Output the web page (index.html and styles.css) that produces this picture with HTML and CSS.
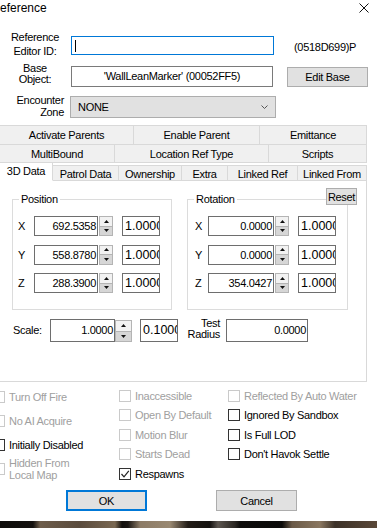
FILE: index.html
```html
<!DOCTYPE html>
<html lang="en">
<head>
  <meta charset="UTF-8" />
  <meta name="viewport" content="width=device-width, initial-scale=1.0" />
  <title>Reference</title>
  <link rel="stylesheet" href="styles.css">
</head>
<body>
  <!-- Barra de título -->
  <div class="titlebar">
    <span class="title">eference</span>
    <svg class="close" width="10" height="10" viewBox="0 0 10 10"><path d="M0.5 0.5L9.5 9.5M9.5 0.5L0.5 9.5" stroke="#111" stroke-width="1" fill="none"/></svg>
  </div>

  <!-- Campos do topo -->
  <div class="form-row row-id">
    <div class="lbl lbl-id">Reference<br>Editor ID:</div>
    <div class="field field-id"><span class="caret"></span></div>
    <div class="formid">(0518D699)P</div>
  </div>
  <div class="form-row row-base">
    <div class="lbl lbl-base">Base<br>Object:</div>
    <div class="field field-base">'WallLeanMarker' (00052FF5)</div>
    <button class="btn btn-edit">Edit Base</button>
  </div>
  <div class="form-row row-zone">
    <div class="lbl lbl-zone">Encounter<br>Zone</div>
    <div class="combo">
      <span>NONE</span>
      <svg width="7" height="4" viewBox="0 0 7 4"><path d="M0.5 0.5L3.5 3.5L6.5 0.5" stroke="#555" stroke-width="1" fill="none"/></svg>
    </div>
  </div>

  <!-- Abas -->
  <div class="tabs">
    <div class="tab-row row-a">
      <div class="tab">Activate Parents</div>
      <div class="tab">Enable Parent</div>
      <div class="tab">Emittance</div>
    </div>
    <div class="tab-row row-b">
      <div class="tab">MultiBound</div>
      <div class="tab">Location Ref Type</div>
      <div class="tab">Scripts</div>
    </div>
    <div class="tab-row row-c">
      <div class="tab active">3D Data</div>
      <div class="tab">Patrol Data</div>
      <div class="tab">Ownership</div>
      <div class="tab">Extra</div>
      <div class="tab">Linked Ref</div>
      <div class="tab">Linked From</div>
    </div>
  </div>

  <div class="panel">
    <button class="btn btn-reset">Reset</button>

    <div class="groups">
      <fieldset class="group pos">
        <legend>Position</legend>
        <div class="axis-rows">
          <div class="axis">
            <span class="axis-lbl">X</span>
            <div class="num">692.5358</div>
            <div class="spin"><span class="up"><svg width="5" height="3" viewBox="0 0 5 3"><path d="M0 3L2.5 0L5 3Z"/></svg></span><span class="down"><svg width="5" height="3" viewBox="0 0 5 3"><path d="M0 0L2.5 3L5 0Z"/></svg></span></div>
            <div class="small">1.0000</div>
          </div>
          <div class="axis">
            <span class="axis-lbl">Y</span>
            <div class="num">558.8780</div>
            <div class="spin"><span class="up"><svg width="5" height="3" viewBox="0 0 5 3"><path d="M0 3L2.5 0L5 3Z"/></svg></span><span class="down"><svg width="5" height="3" viewBox="0 0 5 3"><path d="M0 0L2.5 3L5 0Z"/></svg></span></div>
            <div class="small">1.0000</div>
          </div>
          <div class="axis">
            <span class="axis-lbl">Z</span>
            <div class="num">288.3900</div>
            <div class="spin"><span class="up"><svg width="5" height="3" viewBox="0 0 5 3"><path d="M0 3L2.5 0L5 3Z"/></svg></span><span class="down"><svg width="5" height="3" viewBox="0 0 5 3"><path d="M0 0L2.5 3L5 0Z"/></svg></span></div>
            <div class="small">1.0000</div>
          </div>
        </div>
      </fieldset>

      <fieldset class="group rot">
        <legend>Rotation</legend>
        <div class="axis-rows">
          <div class="axis">
            <span class="axis-lbl">X</span>
            <div class="num">0.0000</div>
            <div class="spin"><span class="up"><svg width="5" height="3" viewBox="0 0 5 3"><path d="M0 3L2.5 0L5 3Z"/></svg></span><span class="down"><svg width="5" height="3" viewBox="0 0 5 3"><path d="M0 0L2.5 3L5 0Z"/></svg></span></div>
            <div class="small">1.0000</div>
          </div>
          <div class="axis">
            <span class="axis-lbl">Y</span>
            <div class="num">0.0000</div>
            <div class="spin"><span class="up"><svg width="5" height="3" viewBox="0 0 5 3"><path d="M0 3L2.5 0L5 3Z"/></svg></span><span class="down"><svg width="5" height="3" viewBox="0 0 5 3"><path d="M0 0L2.5 3L5 0Z"/></svg></span></div>
            <div class="small">1.0000</div>
          </div>
          <div class="axis">
            <span class="axis-lbl">Z</span>
            <div class="num">354.0427</div>
            <div class="spin"><span class="up"><svg width="5" height="3" viewBox="0 0 5 3"><path d="M0 3L2.5 0L5 3Z"/></svg></span><span class="down"><svg width="5" height="3" viewBox="0 0 5 3"><path d="M0 0L2.5 3L5 0Z"/></svg></span></div>
            <div class="small">1.0000</div>
          </div>
        </div>
      </fieldset>
    </div>

    <div class="scale-row">
      <span class="scale-lbl">Scale:</span>
      <div class="num scale-num">1.0000</div>
      <div class="spin spin-lg"><span class="up"><svg width="5" height="3" viewBox="0 0 5 3"><path d="M0 3L2.5 0L5 3Z"/></svg></span><span class="down"><svg width="5" height="3" viewBox="0 0 5 3"><path d="M0 0L2.5 3L5 0Z"/></svg></span></div>
      <div class="small scale-step">0.1000</div>
      <span class="radius-lbl">Test<br>Radius</span>
      <div class="num radius-num">0.0000</div>
    </div>
  </div>

  <!-- Flags -->
  <div class="flags">
    <div class="col col1">
      <div class="check off"><span class="box"></span><span>Turn Off Fire</span></div>
      <div class="check off"><span class="box"></span><span>No AI Acquire</span></div>
      <div class="check"><span class="box"></span><span>Initially Disabled</span></div>
      <div class="check off"><span class="box"></span><span>Hidden From<br>Local Map</span></div>
    </div>
    <div class="col col2">
      <div class="check off"><span class="box"></span><span>Inaccessible</span></div>
      <div class="check off"><span class="box"></span><span>Open By Default</span></div>
      <div class="check off"><span class="box"></span><span>Motion Blur</span></div>
      <div class="check off"><span class="box"></span><span>Starts Dead</span></div>
      <div class="check"><span class="box"><svg width="10" height="10" viewBox="0 0 10 10"><path d="M1.5 5L4 7.8L8.8 1.8" stroke="#222" stroke-width="1.2" fill="none"/></svg></span><span>Respawns</span></div>
    </div>
    <div class="col col3">
      <div class="check off"><span class="box"></span><span>Reflected By Auto Water</span></div>
      <div class="check"><span class="box"></span><span>Ignored By Sandbox</span></div>
      <div class="check"><span class="box"></span><span>Is Full LOD</span></div>
      <div class="check"><span class="box"></span><span>Don't Havok Settle</span></div>
    </div>
  </div>

  <div class="actions">
    <button class="btn btn-ok">OK</button>
    <button class="btn btn-cancel">Cancel</button>
  </div>

  <div class="backdrop"></div>
</body>
</html>
```

FILE: styles.css
```css
* {
  box-sizing: border-box;
}
body {
  margin: 0;
  width: 377px;
  height: 528px;
  overflow: hidden;
  background: #fff;
  color: #000;
  font-family: "Liberation Sans", Arial, sans-serif;
  font-size: 11px;
  letter-spacing: -0.3px;
}

/* Barra de título */
.titlebar {
  height: 30px;
  display: flex;
  justify-content: space-between;
  align-items: flex-start;
}
.title {
  font-size: 12px;
  line-height: 16px;
  letter-spacing: 0;
}
.close {
  margin: 3px 8px 0 0;
}

/* Linhas do formulário */
.form-row {
  display: flex;
  align-items: flex-start;
}
.row-id { height: 33px; }
.row-base { height: 32px; }
.row-zone { height: 30px; }
.lbl {
  width: 58px;
  margin: 0 7px 0 6px;
  text-align: center;
}
.lbl-id { line-height: 14px; }
.lbl-base { line-height: 11px; }
.lbl-zone {
  line-height: 11.5px;
  text-align: right;
}
.field {
  border: 1px solid #7a7a7a;
  background: #fff;
  white-space: nowrap;
}
.field-id {
  width: 203px;
  height: 19px;
  margin-top: 6px;
  padding: 3px 0 0 3px;
  border-color: #0078d7;
}
.caret {
  display: block;
  width: 1px;
  height: 12px;
  background: #000;
}
.formid {
  margin: 10px 0 0 20px;
  line-height: 14px;
}
.field-base {
  width: 202px;
  height: 21px;
  margin-top: 3px;
  text-align: center;
  line-height: 19px;
}
.btn {
  font: inherit;
  letter-spacing: inherit;
  color: #000;
  background: #e1e1e1;
  border: 1px solid #adadad;
  padding: 0;
}
.btn-edit {
  width: 81px;
  height: 20px;
  margin: 4px 0 0 14px;
}
.combo {
  width: 206px;
  height: 22px;
  margin: 1px 0 0 -1px;
  padding: 0 7px;
  display: flex;
  justify-content: space-between;
  align-items: center;
  background: #e1e1e1;
  border: 1px solid #adadad;
}

/* Abas */
.tab-row {
  display: grid;
  width: 367px;
}
.tab {
  display: flex;
  align-items: center;
  justify-content: center;
  background: #f0f0f0;
  border-right: 1px solid #d9d9d9;
  border-bottom: 1px solid #d9d9d9;
  white-space: nowrap;
}
.row-a {
  grid-template-columns: 134px 126px 107px;
  height: 20px;
}
.row-a .tab {
  border-top: 1px solid #d9d9d9;
}
.row-b {
  grid-template-columns: 115px 154px 98px;
  height: 18px;
}
.row-c {
  grid-template-columns: 53px 66px 63px 46px 70px 69px;
  grid-template-rows: 18px;
  height: 18px;
  margin-bottom: -1px;
  position: relative;
  z-index: 1;
}
.row-c .tab {
  align-self: end;
  height: 16px;
  padding-top: 1px;
  border-top: 1px solid #d9d9d9;
}
.row-c .tab.active {
  align-self: start;
  height: 19px;
  margin-top: -1px;
  padding: 0 0 2px;
  background: #fff;
  border-bottom-color: #fff;
}

/* Painel 3D Data */
.panel {
  position: relative;
  width: 368px;
  height: 202px;
  margin-left: -1px;
  padding: 12px 0 0 12px;
  background: #fff;
  border: 1px solid #d9d9d9;
}
.btn-reset {
  position: absolute;
  top: 7px;
  right: 9px;
  width: 31px;
  height: 17px;
  line-height: 14px;
}
.groups {
  display: flex;
  gap: 15px;
}
.group {
  margin: 0;
  padding: 0 0 16px;
  min-width: 0;
  border: 1px solid #dcdcdc;
}
.group legend {
  margin-left: 6px;
  padding: 0 2px;
  line-height: 13px;
}
.pos { width: 160px; }
.rot { width: 161px; }
.axis-rows {
  display: flex;
  flex-direction: column;
  gap: 8.5px;
  margin-top: 10px;
}
.axis {
  display: flex;
  align-items: center;
  height: 20px;
}
.pos .axis { padding-left: 5px; }
.rot .axis { padding-left: 7px; }
.pos .axis-lbl { width: 16px; }
.rot .axis-lbl { width: 13px; }
.num {
  height: 20px;
  line-height: 18px;
  padding-right: 1px;
  text-align: right;
  border: 1px solid #6e6e6e;
  background: #fff;
}
.pos .num { width: 64px; }
.rot .num { width: 66px; }
.spin {
  width: 14px;
  height: 20px;
  margin-left: 1px;
  display: flex;
  flex-direction: column;
  border: 1px solid #b4b4b4;
  background: #e6e6e6;
}
.spin span {
  flex: 1;
  display: flex;
  align-items: center;
  justify-content: center;
}
.spin .up {
  border-bottom: 1px solid #b4b4b4;
  background: #f2f2f2;
}
.spin .down {
  background: #d6d6d6;
}
.spin svg {
  fill: #111;
}
.small {
  width: 38px;
  height: 20px;
  margin-left: 9px;
  padding-left: 2px;
  overflow: hidden;
  white-space: nowrap;
  font-size: 12.5px;
  letter-spacing: 0;
  line-height: 18px;
  border: 1px solid #6e6e6e;
  background: #fff;
}

/* Linha de escala */
.scale-row {
  display: flex;
  align-items: flex-start;
  height: 23px;
  margin-top: 9px;
}
.scale-lbl {
  width: 37px;
  margin-left: 1px;
  line-height: 22px;
}
.scale-num {
  width: 65px;
  height: 23px;
  line-height: 21px;
}
.spin-lg {
  width: 17px;
  height: 22px;
  margin: 1px 0 0;
}
.scale-step {
  height: 23px;
  margin-left: 8px;
  line-height: 21px;
}
.radius-lbl {
  width: 33px;
  margin: -1px 0 0 9px;
  text-align: right;
  line-height: 11px;
}
.radius-num {
  width: 82px;
  height: 23px;
  margin-left: 6px;
  line-height: 21px;
}

/* Flags */
.flags {
  display: grid;
  grid-template-columns: 126px 109px 1fr;
  height: 104px;
  margin-left: -7px;
  padding-top: 3px;
}
.col {
  display: flex;
  flex-direction: column;
}
.col1 .check { height: 24px; }
.col2, .col3 { padding-top: 1px; }
.col2 .check, .col3 .check { height: 19.5px; }
.check {
  display: flex;
  align-items: center;
  gap: 4px;
  white-space: nowrap;
  line-height: 12px;
}
.box {
  flex: none;
  width: 12px;
  height: 12px;
  display: flex;
  align-items: center;
  justify-content: center;
  border: 1px solid #333;
  background: #fff;
}
.off {
  color: #a0a0a0;
}
.off .box {
  border-color: #cacaca;
}

/* Botões */
.actions {
  display: flex;
  gap: 69px;
  height: 35px;
  padding: 4px 0 0 66px;
}
.btn-ok,
.btn-cancel {
  width: 81px;
  height: 21px;
}
.btn-ok {
  border: 2px solid #0078d7;
}

/* Fundo do jogo por baixo do diálogo */
.backdrop {
  height: 7px;
  background: linear-gradient(90deg, #0e0c0b 0, #14110f 33px, #6e5d4b 40px, #5a4b3d 80px, #7a6852 115px, #120f0d 122px, #1a1613 128px, #8c7b66 140px, #9a8972 170px, #221c17 188px, #141210 210px, #5c5650 218px, #2a2622 235px, #0d0c0b 240px, #0b0a09 282px, #6b5a48 292px, #8a7760 320px, #3c3128 335px, #5a4838 377px);
}
```
